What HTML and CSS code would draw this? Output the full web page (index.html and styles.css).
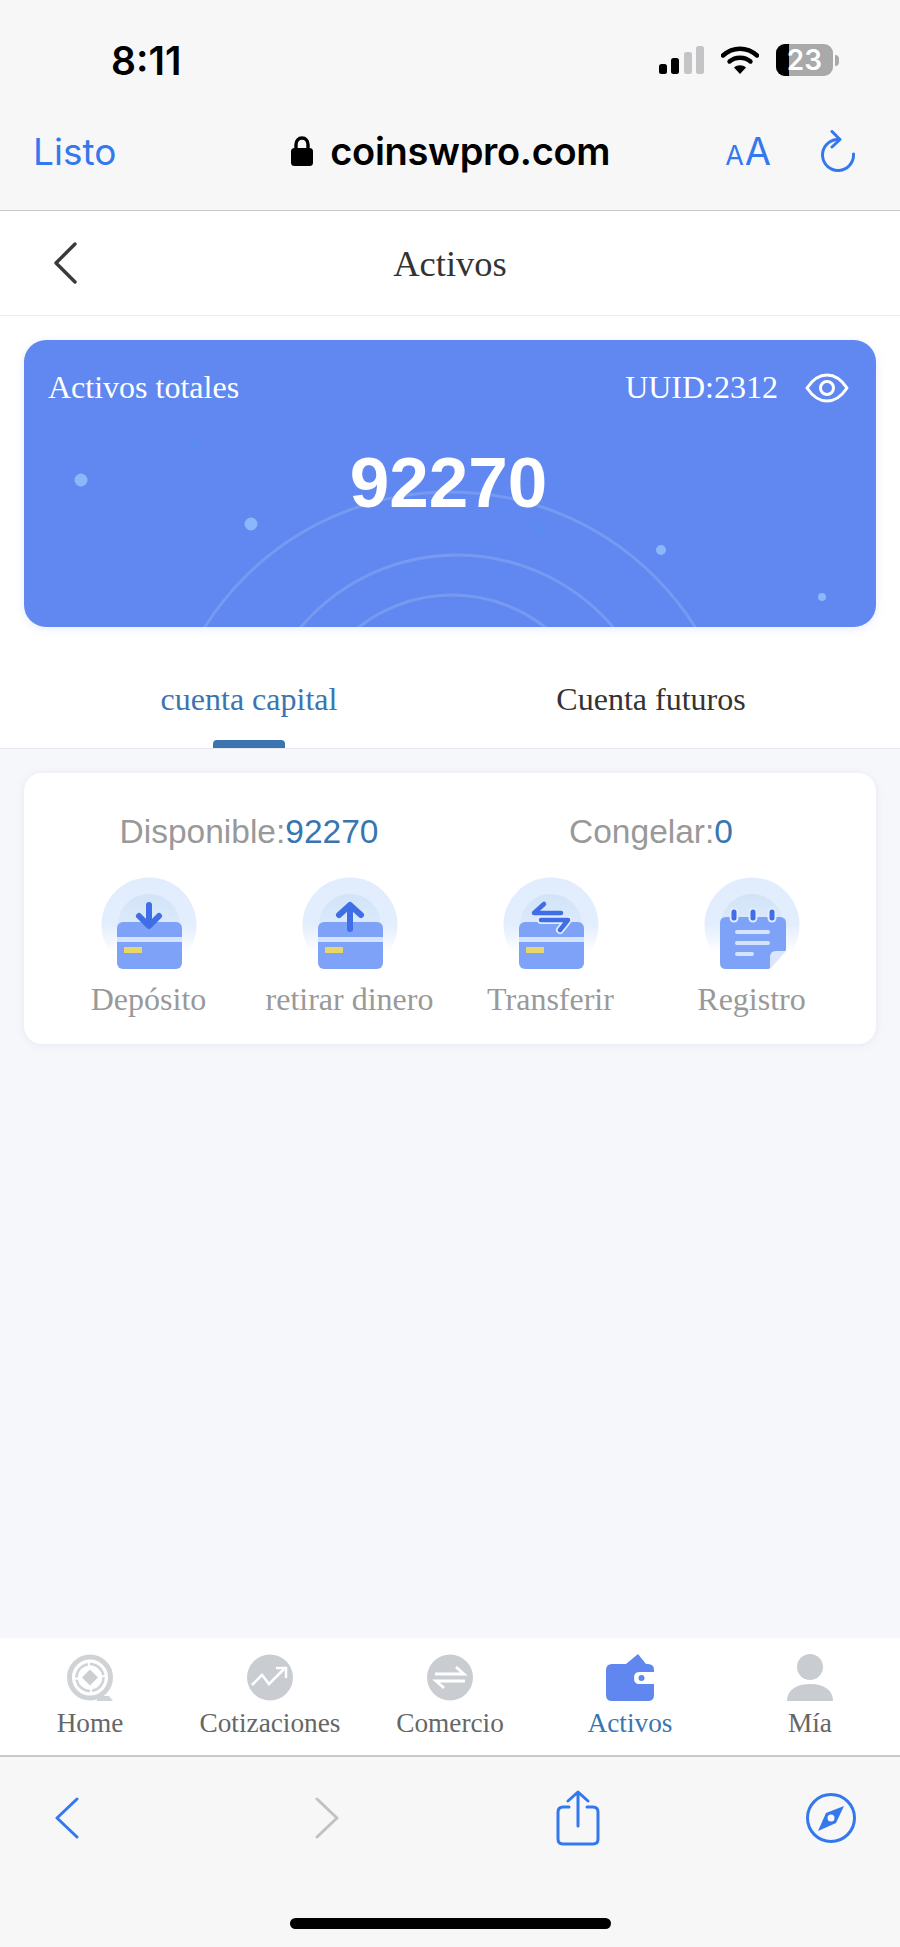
FILE: index.html
```html
<!DOCTYPE html>
<html>

<head>
    <meta charset="UTF-8">
    <title>Activos</title>
    <link rel="stylesheet" href="styles.css">
</head>

<body>
    <svg class="defs" width="0" height="0">
        <defs>
            <linearGradient id="halo-outer" x1="0" y1="0" x2="0" y2="1">
                <stop offset="0" stop-color="#e1edfd" />
                <stop offset="0.5" stop-color="#e3eefd" />
                <stop offset="0.8" stop-color="#ffffff" />
            </linearGradient>
            <linearGradient id="halo-inner" x1="0" y1="0" x2="0" y2="1">
                <stop offset="0" stop-color="#d3e4f8" />
                <stop offset="0.5" stop-color="#dbe9fb" />
                <stop offset="1" stop-color="#ffffff" />
            </linearGradient>
        </defs>
    </svg>

    <div id="page">
        <div id="safari-top">
            <div class="status-bar">
                <span class="clock">8:11</span>
                <div class="status-icons">
                    <svg width="45" height="28" viewBox="0 0 45 28">
                        <rect x="0" y="18" width="8" height="10" rx="2.5" fill="#000" />
                        <rect x="12" y="12" width="8" height="16" rx="2.5" fill="#000" />
                        <rect x="25" y="6" width="8" height="22" rx="2.5" fill="#c4c4c6" />
                        <rect x="37" y="0" width="8" height="28" rx="2.5" fill="#c4c4c6" />
                    </svg>
                    <svg width="38" height="28" viewBox="0 0 38 28">
                        <path d="M2 9.5C12 .5 26 .5 36 9.5" fill="none" stroke="#000" stroke-width="4.4" stroke-linecap="round" />
                        <path d="M8.5 15.5C14.5 10.5 23.5 10.5 29.5 15.5" fill="none" stroke="#000" stroke-width="4.4" stroke-linecap="round" />
                        <path d="M13 21.5C16.5 18.4 21.5 18.4 25 21.5L19 28Z" fill="#000" />
                    </svg>
                    <div class="battery">
                        <div class="battery-body">
                            <div class="battery-level"></div>
                            <span class="battery-text">23</span>
                        </div>
                        <div class="battery-nub"></div>
                    </div>
                </div>
            </div>
            <div class="url-bar">
                <span class="listo">Listo</span>
                <div class="address">
                    <svg width="22" height="30" viewBox="0 0 22 30">
                        <path d="M5 14V8.500C5 4.800 7.500 2 11 2s6 2.800 6 6.500V14" fill="none" stroke="#000" stroke-width="3.400" />
                        <rect x="0" y="12" width="22" height="18" rx="3.500" fill="#000" />
                    </svg>
                    <span class="domain">coinswpro.com</span>
                </div>
                <div class="url-actions">
                    <span class="text-size"><span class="small-a">A</span><span class="big-a">A</span></span>
                    <svg width="36" height="42" viewBox="0 0 36 42">
                        <path d="M17 9.500A15.500 15.500 0 1 0 33.500 24" fill="none" stroke="#3478ee" stroke-width="3" stroke-linecap="round" />
                        <path d="M12 1.500L20 9.500L12 17" fill="none" stroke="#3478ee" stroke-width="3" stroke-linecap="round" stroke-linejoin="round" />
                    </svg>
                </div>
            </div>
        </div>

        <div id="header">
            <svg class="header-back" width="24" height="42" viewBox="0 0 24 42">
                <path d="M22 2L3 21L22 40" fill="none" stroke="#3a3a3a" stroke-width="3.400" stroke-linecap="round" stroke-linejoin="round" />
            </svg>
            <div class="header-title">Activos</div>
        </div>

        <div id="content">
            <div class="balance-wrap">
                <div class="balance-card">
                    <svg class="balance-bg" width="852" height="287" viewBox="0 0 852 287">
                        <g fill="none" stroke="#769af2" stroke-width="3">
                            <circle cx="426" cy="442" r="290" />
                            <circle cx="433" cy="420" r="205" />
                            <circle cx="428" cy="406" r="151" />
                        </g>
                        <circle cx="57" cy="140" r="6.500" fill="#8ab8fb" />
                        <circle cx="227" cy="184" r="6.500" fill="#8ab8fb" />
                        <circle cx="637" cy="210" r="5" fill="#8ab8fb" />
                        <circle cx="798" cy="257" r="4" fill="#8ab8fb" />
                        <circle cx="171" cy="105" r="4.500" fill="#5a8bf0" />
                        <circle cx="514" cy="189" r="5" fill="#5a8bf0" />
                    </svg>
                    <div class="balance-top">
                        <span>Activos totales</span>
                        <div class="balance-uuid">
                            <span>UUID:2312</span>
                            <svg width="44" height="30" viewBox="0 0 44 30">
                                <path d="M2 15C8 6 14 2 22 2s14 4 20 13c-6 9-12 13-20 13S8 24 2 15Z" fill="none" stroke="#fff" stroke-width="3" stroke-linejoin="round" />
                                <circle cx="22" cy="15" r="6.500" fill="none" stroke="#fff" stroke-width="3" />
                            </svg>
                        </div>
                    </div>
                    <div class="balance-total">92270</div>
                </div>
            </div>

            <div class="tabs">
                <div class="tab active">cuenta capital</div>
                <div class="tab">Cuenta futuros</div>
            </div>

            <div class="account-card">
                <div class="account-numbers">
                    <div>Disponible:<span class="num">92270</span></div>
                    <div>Congelar:<span class="num">0</span></div>
                </div>
                <div class="actions">
                    <div class="action">
                        <svg width="96" height="96" viewBox="0 0 96 96">
                            <circle cx="48" cy="48" r="47.500" fill="url(#halo-outer)" />
                            <circle cx="48" cy="48" r="31" fill="url(#halo-inner)" />
                            <rect x="16" y="45" width="65" height="47" rx="6" fill="#7da2f8" />
                            <rect x="16" y="60" width="65" height="5" fill="#d6e3fd" />
                            <rect x="23" y="70" width="18" height="6" fill="#e8d668" />
                            <path d="M48 28V46" stroke="#3f6ee6" stroke-width="6" stroke-linecap="round" />
                            <path d="M38 39L48 49L58 39" fill="none" stroke="#3f6ee6" stroke-width="6" stroke-linecap="round" stroke-linejoin="round" />
                        </svg>
                        <span>Depósito</span>
                    </div>
                    <div class="action">
                        <svg width="96" height="96" viewBox="0 0 96 96">
                            <circle cx="48" cy="48" r="47.500" fill="url(#halo-outer)" />
                            <circle cx="48" cy="48" r="31" fill="url(#halo-inner)" />
                            <rect x="16" y="45" width="65" height="47" rx="6" fill="#7da2f8" />
                            <rect x="16" y="60" width="65" height="5" fill="#d6e3fd" />
                            <rect x="23" y="70" width="18" height="6" fill="#e8d668" />
                            <path d="M48 30V52" stroke="#3f6ee6" stroke-width="6" stroke-linecap="round" />
                            <path d="M37 38L48 28L59 38" fill="none" stroke="#3f6ee6" stroke-width="6" stroke-linecap="round" stroke-linejoin="round" />
                        </svg>
                        <span>retirar dinero</span>
                    </div>
                    <div class="action">
                        <svg width="96" height="96" viewBox="0 0 96 96">
                            <circle cx="48" cy="48" r="47.500" fill="url(#halo-outer)" />
                            <circle cx="48" cy="48" r="31" fill="url(#halo-inner)" />
                            <rect x="16" y="45" width="65" height="47" rx="6" fill="#7da2f8" />
                            <rect x="16" y="60" width="65" height="5" fill="#d6e3fd" />
                            <rect x="23" y="70" width="18" height="6" fill="#e8d668" />
                            <path d="M58 36H31L41 27" fill="none" stroke="#3f6ee6" stroke-width="4.500" stroke-linecap="round" stroke-linejoin="round" />
                            <path d="M38 43H65L57 53" fill="none" stroke="#e3ecfd" stroke-width="8" stroke-linecap="round" stroke-linejoin="round" />
                            <path d="M38 43H65L57 53" fill="none" stroke="#3f6ee6" stroke-width="4.500" stroke-linecap="round" stroke-linejoin="round" />
                        </svg>
                        <span>Transferir</span>
                    </div>
                    <div class="action">
                        <svg width="96" height="96" viewBox="0 0 96 96">
                            <circle cx="48" cy="48" r="47.500" fill="url(#halo-outer)" />
                            <circle cx="48" cy="48" r="31" fill="url(#halo-inner)" />
                            <path d="M22 40H76Q82 40 82 46V73L65 92H22Q16 92 16 86V46Q16 40 22 40Z" fill="#7da2f8" />
                            <path d="M82 74L66 92V80Q66 74 72 74Z" fill="#dbe6fd" />
                            <g stroke="#e3ecfd" stroke-width="9" stroke-linecap="round">
                                <path d="M30 35V41" />
                                <path d="M49 35V41" />
                                <path d="M68 35V41" />
                            </g>
                            <g stroke="#3f6ee6" stroke-width="5" stroke-linecap="round">
                                <path d="M30 35V41" />
                                <path d="M49 35V41" />
                                <path d="M68 35V41" />
                            </g>
                            <g stroke="#d6e3fd" stroke-width="4" stroke-linecap="round">
                                <path d="M33 55H64" />
                                <path d="M33 66H64" />
                                <path d="M33 77H48" />
                            </g>
                        </svg>
                        <span>Registro</span>
                    </div>
                </div>
            </div>
        </div>

        <div id="tabbar">
            <div class="tabbar-item">
                <svg width="46" height="47" viewBox="0 0 46 47">
                    <circle cx="23" cy="23.500" r="20.500" fill="none" stroke="#d0d3d6" stroke-width="5" />
                    <circle cx="23" cy="23.500" r="13.500" fill="none" stroke="#d0d3d6" stroke-width="2.500" stroke-dasharray="19 2" />
                    <path d="M23 15.500L31 23.500L23 31.500L15 23.500Z" fill="#cbcfd2" />
                    <path d="M29 42H42L46 47H30Z" fill="#d0d3d6" />
                </svg>
                <span>Home</span>
            </div>
            <div class="tabbar-item">
                <svg width="46" height="47" viewBox="0 0 46 47">
                    <circle cx="23" cy="23.500" r="23" fill="#c9cdd1" />
                    <path d="M5 31L15 21L22 30L37 15" fill="none" stroke="#fff" stroke-width="2.500" />
                    <path d="M29 14H39V24" fill="none" stroke="#fff" stroke-width="2.500" />
                </svg>
                <span>Cotizaciones</span>
            </div>
            <div class="tabbar-item">
                <svg width="46" height="47" viewBox="0 0 46 47">
                    <circle cx="23" cy="23.500" r="23" fill="#c9cdd1" />
                    <path d="M8 20H37L29 13" fill="none" stroke="#fff" stroke-width="2.800" />
                    <path d="M38 27H9L17 34" fill="none" stroke="#fff" stroke-width="2.800" />
                </svg>
                <span>Comercio</span>
            </div>
            <div class="tabbar-item active">
                <svg width="48" height="47" viewBox="0 0 48 47">
                    <path d="M20 10L32 0L40 10Z" fill="#5f87ef" />
                    <path d="M6 10H42Q48 10 48 16V41Q48 47 42 47H6Q0 47 0 41V16Q0 10 6 10Z" fill="#5f87ef" />
                    <path d="M33 18H48V30H33Q28 30 28 24T33 18Z" fill="#fff" />
                    <circle cx="35.500" cy="24" r="3" fill="#5f87ef" />
                </svg>
                <span>Activos</span>
            </div>
            <div class="tabbar-item">
                <svg width="46" height="47" viewBox="0 0 46 47">
                    <circle cx="23" cy="13" r="13" fill="#c9cdd1" />
                    <path d="M0 47C0 36 9 30 23 30S46 36 46 47Z" fill="#c9cdd1" />
                </svg>
                <span>Mía</span>
            </div>
        </div>

        <div id="safari-bottom">
            <div class="toolbar">
                <svg width="24" height="42" viewBox="0 0 24 42">
                    <path d="M22 2L2 21L22 40" fill="none" stroke="#3478ee" stroke-width="3" stroke-linecap="round" stroke-linejoin="round" />
                </svg>
                <svg width="24" height="42" viewBox="0 0 24 42">
                    <path d="M2 2L22 21L2 40" fill="none" stroke="#c2c2c4" stroke-width="3" stroke-linecap="round" stroke-linejoin="round" />
                </svg>
                <svg width="44" height="56" viewBox="0 0 44 56">
                    <path d="M13 17H7Q2 17 2 22V49Q2 54 7 54H37Q42 54 42 49V22Q42 17 37 17H31" fill="none" stroke="#3478ee" stroke-width="3" stroke-linecap="round" />
                    <path d="M22 36V2M12 11L22 2L32 11" fill="none" stroke="#3478ee" stroke-width="3" stroke-linecap="round" stroke-linejoin="round" />
                </svg>
                <svg width="50" height="50" viewBox="0 0 50 50">
                    <circle cx="25" cy="25" r="23.500" fill="none" stroke="#3478ee" stroke-width="3" />
                    <path d="M38 13L30 30L12 38L20 20Z" fill="#3478ee" />
                    <circle cx="25" cy="25" r="3.500" fill="#f7f7f8" />
                </svg>
            </div>
            <div class="home-indicator"></div>
        </div>
    </div>
</body>

</html>
```
FILE: styles.css
```css
body {
    margin: 0;
    background: #f5f7fb;
    font-family: 'Liberation Serif', serif;
}

svg {
    display: block;
    flex-shrink: 0;
}

.defs {
    position: absolute;
}

#page {
    display: flex;
    flex-direction: column;
    height: 1947px;
    overflow: hidden;
}

/* browser chrome */

#safari-top {
    height: 210px;
    background: #f7f7f8;
    border-bottom: 1px solid #c9c9cb;
    font-family: 'Inter', sans-serif;
}

.status-bar {
    display: flex;
    justify-content: space-between;
    align-items: center;
    height: 32px;
    padding: 44px 61px 0 111px;
}

.clock {
    font-size: 39px;
    font-weight: 600;
    color: #000;
}

.status-icons {
    display: flex;
    align-items: center;
    gap: 17px;
}

.battery {
    display: flex;
    align-items: center;
    gap: 2px;
}

.battery-body {
    position: relative;
    display: flex;
    align-items: center;
    justify-content: center;
    width: 57px;
    height: 32px;
    border-radius: 9px;
    background: #a9a9a9;
    overflow: hidden;
}

.battery-level {
    position: absolute;
    left: 0;
    top: 0;
    bottom: 0;
    width: 13px;
    background: #000;
}

.battery-text {
    position: relative;
    font-size: 28px;
    font-weight: 600;
    color: #fff;
}

.battery-nub {
    width: 4px;
    height: 11px;
    border-radius: 0 4px 4px 0;
    background: #a9a9a9;
}

.url-bar {
    display: flex;
    align-items: center;
    justify-content: space-between;
    height: 44px;
    padding: 53px 44px 0 33px;
}

.listo {
    font-size: 37px;
    color: #3478ee;
}

.address {
    display: flex;
    align-items: center;
    gap: 17px;
    margin-left: 60px;
}

.domain {
    font-size: 38px;
    font-weight: 600;
    letter-spacing: -0.3px;
    color: #000;
}

.url-actions {
    display: flex;
    align-items: center;
    gap: 49px;
}

.text-size {
    display: flex;
    align-items: baseline;
    gap: 1px;
    color: #3478ee;
}

.small-a {
    font-size: 27px;
}

.big-a {
    font-size: 38px;
}

/* app header */

#header {
    display: flex;
    align-items: center;
    height: 104px;
    padding: 0 24px;
    background: #fff;
    border-bottom: 1px solid #ececee;
    color: #333;
}

.header-back {
    margin-left: 29px;
}

.header-title {
    flex-grow: 1;
    margin-right: 53px;
    text-align: center;
    font-size: 36.5px;
}

#content {
    flex-grow: 1;
}

.balance-wrap {
    padding: 24px 24px 0;
    background: #fff;
}

.balance-card {
    position: relative;
    height: 287px;
    padding: 0 27px 0 24px;
    box-sizing: border-box;
    border-radius: 22px;
    background: #6088f0;
    box-shadow: 0 2px 10px rgba(96, 136, 240, 0.15);
    overflow: hidden;
    color: #fff;
}

.balance-bg {
    position: absolute;
    left: 0;
    top: 0;
}

.balance-top {
    position: relative;
    display: flex;
    justify-content: space-between;
    align-items: center;
    padding-top: 29px;
    font-size: 32px;
}

.balance-uuid {
    display: flex;
    align-items: center;
    gap: 27px;
}

.balance-total {
    position: relative;
    margin-top: 36px;
    text-align: center;
    font-family: 'Liberation Sans', sans-serif;
    font-size: 71px;
    font-weight: bold;
}

.tabs {
    display: flex;
    height: 121px;
    padding: 0 48px;
    background: #fff;
    border-bottom: 1px solid #e8e9ec;
}

.tab {
    flex: 1;
    padding-top: 54px;
    text-align: center;
    font-size: 32px;
    color: #333;
}

.tab.active {
    position: relative;
    color: #3a75b0;
}

.tab.active::after {
    content: "";
    position: absolute;
    left: 165px;
    bottom: 0;
    width: 72px;
    height: 8px;
    border-radius: 4px 4px 0 0;
    background: #3a75b0;
}

.account-card {
    margin: 24px 24px 0;
    padding: 40px 24px 0;
    height: 271px;
    box-sizing: border-box;
    border-radius: 18px;
    background: #fff;
    box-shadow: 0 1px 8px rgba(120, 130, 160, 0.12);
}

.account-numbers {
    display: grid;
    grid-template-columns: 1fr 1fr;
    text-align: center;
    font-family: 'Liberation Sans', sans-serif;
    font-size: 33.5px;
    color: #999;
}

.num {
    color: #3a75b0;
}

.actions {
    display: grid;
    grid-template-columns: repeat(4, 1fr);
    margin-top: 26px;
}

.action {
    display: flex;
    flex-direction: column;
    align-items: center;
    gap: 8px;
    font-size: 32px;
    color: #999;
}

/* bottom nav */

#tabbar {
    display: flex;
    height: 117px;
    background: #fff;
    border-bottom: 2px solid #c9c9cb;
}

.tabbar-item {
    flex: 1;
    display: flex;
    flex-direction: column;
    align-items: center;
    padding-top: 16px;
    font-size: 27.3px;
    color: #666;
}

.tabbar-item span {
    margin-top: 7px;
}

.tabbar-item.active {
    color: #3a75b0;
}

#safari-bottom {
    height: 190px;
    background: #f7f7f8;
}

.toolbar {
    display: grid;
    grid-template-columns: 260px 241px 250px auto;
    align-items: center;
    height: 56px;
    padding: 33px 0 0 55px;
}

.home-indicator {
    width: 321px;
    height: 11px;
    margin: 72px auto 0;
    border-radius: 6px;
    background: #000;
}
```
